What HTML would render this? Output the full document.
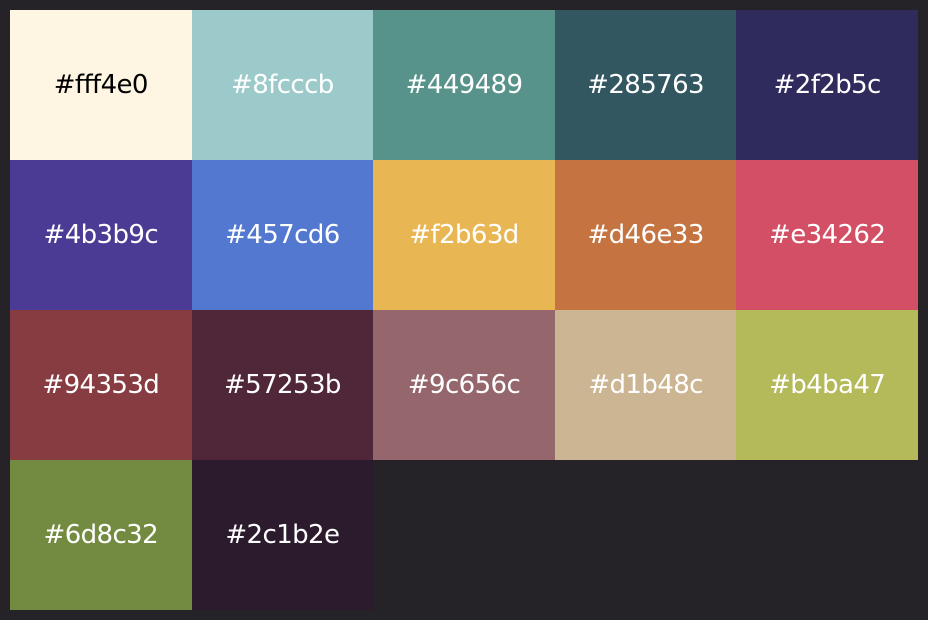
<!DOCTYPE html>
<html><head><style>
html,body{margin:0;padding:0;background:#252328;width:928px;height:620px;overflow:hidden}
.g{position:absolute;left:10px;top:10px;width:908px;display:grid;grid-template-columns:repeat(5,181.6px);grid-auto-rows:150px}
.g div{display:flex;align-items:center;justify-content:center;color:#fff;font-family:"DejaVu Sans","Liberation Sans",sans-serif;font-size:26px;letter-spacing:-0.6px}
</style></head><body>
<div class="g">
<div style="background:#fff5e3;color:#000">#fff4e0</div>
<div style="background:#9ccaca">#8fcccb</div>
<div style="background:#57938a">#449489</div>
<div style="background:#335761">#285763</div>
<div style="background:#2f2b5c">#2f2b5c</div>
<div style="background:#4b3b95">#4b3b9c</div>
<div style="background:#5279cf">#457cd6</div>
<div style="background:#e9b654">#f2b63d</div>
<div style="background:#c57441">#d46e33</div>
<div style="background:#d24f66">#e34262</div>
<div style="background:#873c42">#94353d</div>
<div style="background:#4f2739">#57253b</div>
<div style="background:#95676d">#9c656c</div>
<div style="background:#ccb593">#d1b48c</div>
<div style="background:#b4b95a">#b4ba47</div>
<div style="background:#738b40">#6d8c32</div>
<div style="background:#2c1b2d">#2c1b2e</div>
</div>
</body></html>
